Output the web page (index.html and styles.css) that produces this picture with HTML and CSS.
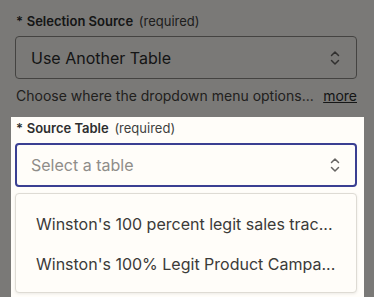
FILE: index.html
```html
<!DOCTYPE html>
<html lang="en">
<head>
  <meta charset="UTF-8"/>
  <title>Source Table</title>
  <link rel="stylesheet" href="styles.css">
</head>
<body>
  <!-- Dimmed form behind the focused field -->
  <div class="form">
    <div class="field">
      <label class="label"><span class="star">*</span> <b>Selection Source</b> <span class="req">(required)</span></label>
      <div class="select">
        <span class="value">Use Another Table</span>
        <svg class="chev" width="10" height="16" viewBox="0 0 10 16"><path d="M1.5 5.5 L5 2 L8.5 5.5 M1.5 10.5 L5 14 L8.5 10.5" fill="none" stroke="currentColor" stroke-width="1.5" stroke-linecap="round" stroke-linejoin="round"/></svg>
      </div>
      <p class="help">Choose where the dropdown menu options... <a href="#">more</a></p>
    </div>

    <!-- overlay over the rest of the page -->
    <div class="overlay"></div>

    <!-- Focused field sits above the overlay -->
    <div class="field focus">
      <label class="label"><span class="star">*</span> <b>Source Table</b> <span class="req">(required)</span></label>
      <div class="select active">
        <span class="value placeholder">Select a table</span>
        <svg class="chev" width="10" height="16" viewBox="0 0 10 16"><path d="M1.5 5.5 L5 2 L8.5 5.5 M1.5 10.5 L5 14 L8.5 10.5" fill="none" stroke="currentColor" stroke-width="1.5" stroke-linecap="round" stroke-linejoin="round"/></svg>
      </div>
      <ul class="menu">
        <li>Winston's 100 percent legit sales trac...</li>
        <li>Winston's 100% Legit Product Campa...</li>
      </ul>
    </div>
  </div>
</body>
</html>
```

FILE: styles.css
```css
/* BASICS */
* { box-sizing: border-box; margin: 0; padding: 0; }
html, body { height: 100%; overflow: hidden; }
body { background: #fffdf9; color: #2d2e2e; font-family: Inter, "Noto Sans", sans-serif; }

/* FORM */
.form { padding: 12px 10px 0 11px; }
.field { padding: 0 7px 0 4px; }
.label { display: block; font-size: 13px; line-height: 18px; padding-left: 1px; }
.label b { font-weight: 600; }
.star { font-weight: 600; }
.req { color: #403f3d; margin-left: 2px; }

/* SELECT BOX */
.select { margin-top: 6px; height: 43px; border: 1px solid #8e8c88; border-radius: 4px; background: #fffdf9; display: flex; align-items: center; justify-content: space-between; padding: 0 16px 0 15px; }
.value { font-size: 16px; }
.placeholder { color: #8f8d89; }
.chev { color: #666462; }
.select.active { height: 44px; border: 2px solid #3a3f92; padding: 0 15px 0 14px; }

.help { margin-top: 7px; font-size: 14px; line-height: 20px; color: #46443f; display: flex; justify-content: space-between; padding-left: 1px; }
.help a { color: #2d2e2e; }

/* OVERLAY + FOCUSED FIELD */
.overlay { position: fixed; inset: 0; background: rgba(0, 0, 0, 0.52); z-index: 1; }
.field.focus { position: relative; z-index: 2; background: #fffdf9; margin-top: 11px; padding-top: 2px; padding-bottom: 4px; }

/* DROPDOWN MENU */
.menu { list-style: none; margin-top: 6px; border: 1px solid #dedbd4; border-radius: 4px; background: #fffdf9; padding: 10px 20px 8px 20px; box-shadow: 0 1px 3px rgba(0, 0, 0, 0.08); }
.menu li { height: 40px; line-height: 40px; font-size: 16px; color: #3b3a38; white-space: nowrap; overflow: hidden; }
```
